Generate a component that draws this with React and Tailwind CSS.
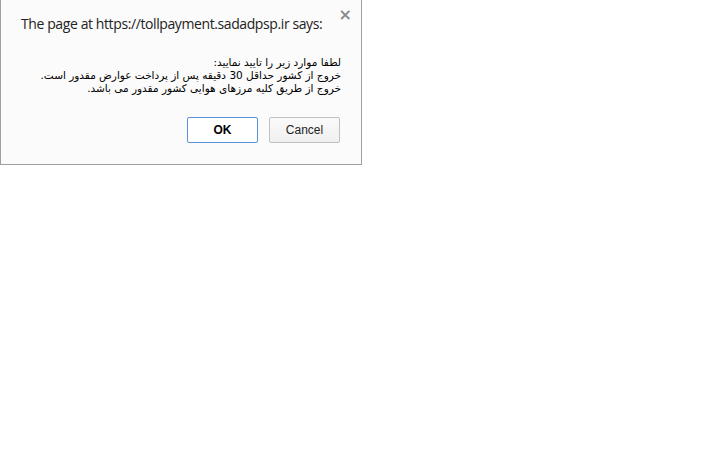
import React from "react";

export default function App() {
  return (
    <div className="w-[720px] h-[450px] bg-white overflow-hidden">
      <div className="w-[362px] h-[165px] bg-[#fbfbfb] border border-t-0 border-[#a0a0a0] flex flex-col relative">
        <button className="absolute right-[9px] top-[7px] text-[#8a8a8a] text-[16px] leading-none font-bold font-['DejaVu_Sans',sans-serif]">
          ×
        </button>
        <div className="pl-[20px] pt-[13px] text-[14px] text-[#222] tracking-[-0.4px] font-['Open_Sans','Liberation_Sans',sans-serif]">
          The page at https://tollpayment.sadadpsp.ir says:
        </div>
        <div dir="rtl" className="mt-[22px] pr-[20px] text-[10.5px] leading-[13px] text-black font-['DejaVu_Sans',sans-serif]">
          <div>لطفا موارد زیر را تایید نمایید:</div>
          <div>خروج از کشور حداقل 30 دقیقه پس از پرداخت عوارض مقدور است.</div>
          <div>خروج از طریق کلیه مرزهای هوایی کشور مقدور می باشد.</div>
        </div>
        <div className="flex justify-end gap-[11px] pr-[21px] mt-[22px]">
          <button className="w-[71px] h-[26px] rounded-[2px] border border-[#5b8fe0] bg-white text-[12px] font-bold text-black font-['Liberation_Sans',sans-serif]">
            OK
          </button>
          <button className="w-[71px] h-[26px] rounded-[2px] border border-[#c0c0c0] bg-gradient-to-b from-[#fafafa] to-[#f0f0f0] text-[12px] text-[#222] font-['Liberation_Sans',sans-serif]">
            Cancel
          </button>
        </div>
      </div>
    </div>
  );
}
